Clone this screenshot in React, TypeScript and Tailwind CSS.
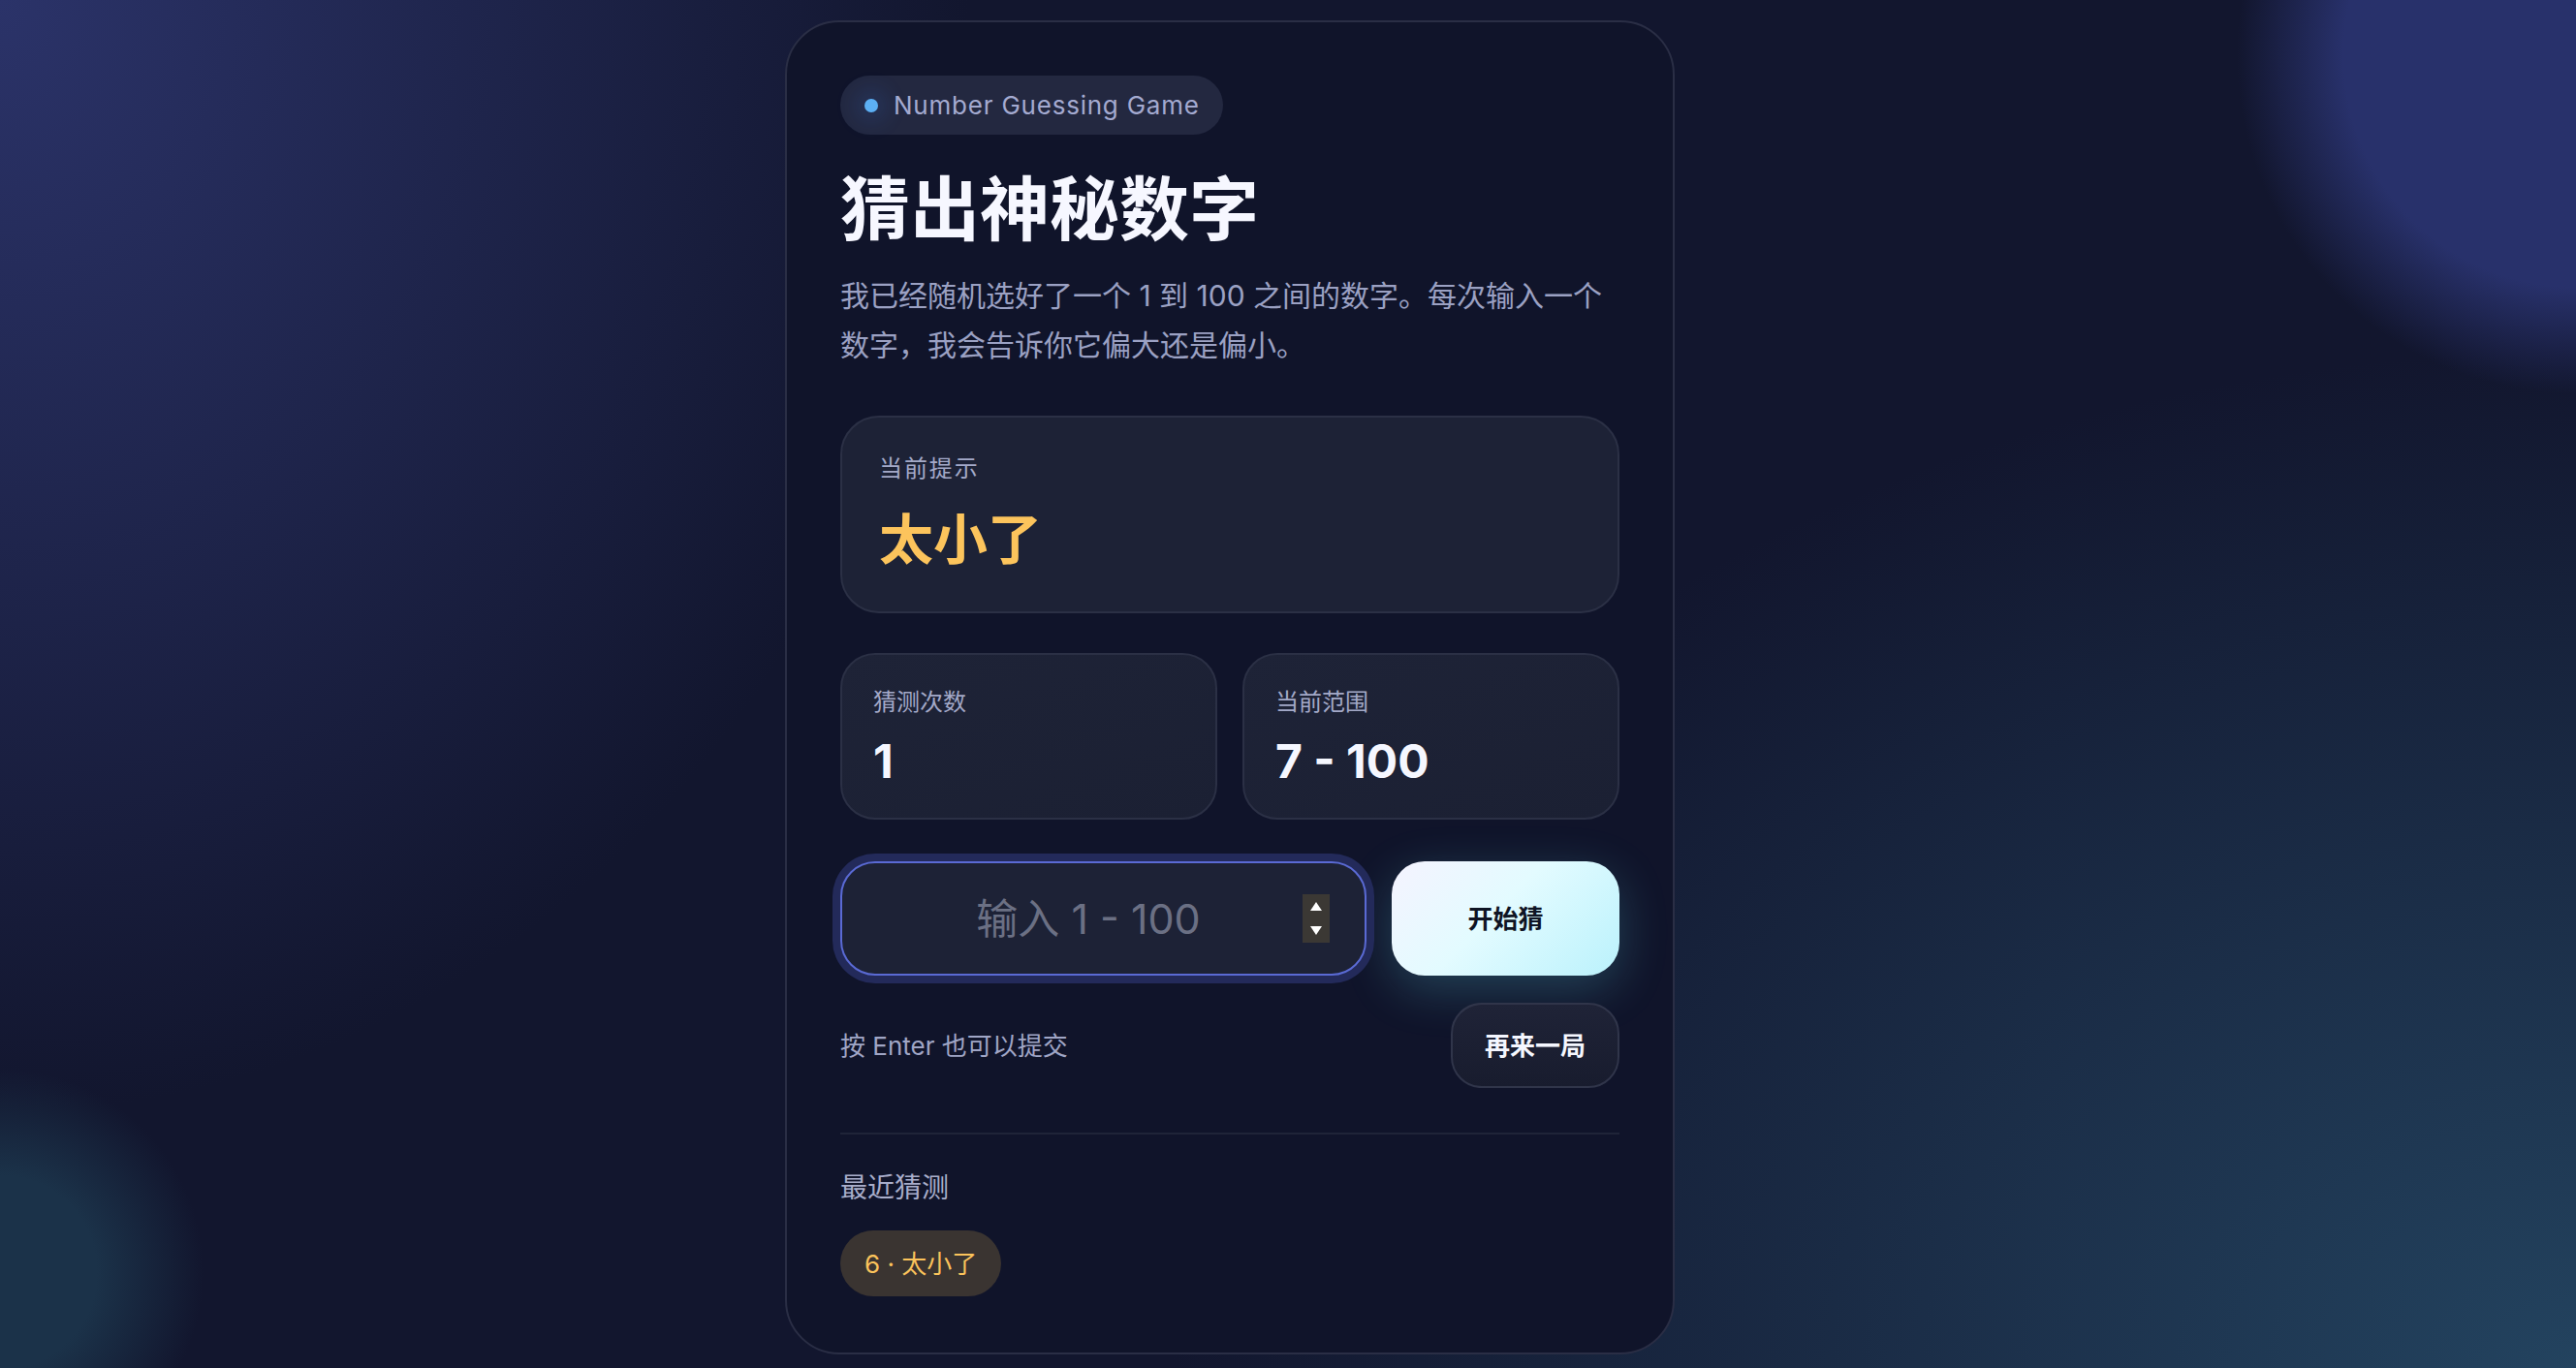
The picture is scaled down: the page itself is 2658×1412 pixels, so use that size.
import React, { useState } from "react";

const font = "font-['Inter','Noto_Sans_CJK_SC',sans-serif]";

const StatBox = ({ label, value }: { label: string; value: string }) => (
  <div className="rounded-[36px] border-2 border-[#2b3045] bg-[linear-gradient(160deg,#1e2337_0%,#1b2033_100%)] px-[32px] pt-[31px] pb-[29px]">
    <div className="text-[24px] leading-[36px] text-[#a3a9c8]">{label}</div>
    <div className="mt-[14px] text-[48px] leading-[58px] font-bold text-[#f5f7ff]">{value}</div>
  </div>
);

const App = () => {
  const [guess, setGuess] = useState<string>("");

  return (
    <div
      className={`${font} min-h-screen w-full overflow-hidden bg-[#12162e] bg-[image:radial-gradient(circle_at_100%_4%,#28316b_0px,#28316b_240px,transparent_350px),radial-gradient(circle_at_0%_93%,#1b3249_0px,#1b3249_100px,transparent_210px),radial-gradient(ellipse_1000px_1150px_at_0%_0%,#2b3369_0%,transparent_100%),radial-gradient(ellipse_1450px_1050px_at_100%_100%,#23435f_0%,transparent_100%)] flex justify-center pr-[120px] pt-[21px] pb-[14px]`}
    >
      <div className="w-[918px] rounded-[56px] border-2 border-[#2a2e45] bg-[#10142a] px-[55px] pt-[55px] pb-[56px]">
        {/* badge */}
        <div className="inline-flex h-[61px] items-center gap-[16px] rounded-full bg-[#232840] pl-[25px] pr-[24px]">
          <span className="h-[14px] w-[14px] rounded-full bg-[#5cb0f4] shadow-[0_0_22px_10px_rgba(56,130,246,0.14)]" />
          <span className="text-[26px] tracking-[0.03em] text-[#a4aad0]">Number Guessing Game</span>
        </div>

        <h1 className="mt-[37px] text-[72px] leading-[1.1] font-bold text-[#f6f7ff]">猜出神秘数字</h1>
        <p className="mt-[25px] text-[30px] leading-[51px] text-[#9ba1c3]">
          我已经随机选好了一个 1 到 100 之间的数字。每次输入一个数字，我会告诉你它偏大还是偏小。
        </p>

        {/* hint */}
        <div className="mt-[47px] rounded-[40px] border-2 border-[#2b3045] bg-[#1d2236] px-[38px] pt-[35px] pb-[40px]">
          <div className="text-[24px] leading-[36px] tracking-[0.08em] text-[#a3a9c8]">当前提示</div>
          <div className="mt-[22px] text-[56px] leading-[67px] font-bold text-[#fcc45c]">太小了</div>
        </div>

        {/* stats */}
        <div className="mt-[41px] grid grid-cols-2 gap-[26px]">
          <StatBox label="猜测次数" value="1" />
          <StatBox label="当前范围" value="7 - 100" />
        </div>

        {/* input row */}
        <div className="mt-[43px] flex items-center gap-[26px]">
          <div className="relative flex-1">
            <input
              type="text"
              inputMode="numeric"
              value={guess}
              onChange={(e) => setGuess(e.target.value)}
              placeholder="输入 1 - 100"
              className="h-[118px] w-full rounded-[36px] border-2 border-[#5a6ad4] bg-[#1d2236] pl-[40px] pr-[71px] text-center text-[43px] text-[#e5e7f5] placeholder:text-[#6b7084] shadow-[0_0_0_8px_#232a5a] outline-none"
            />
            <div className="absolute right-[38px] top-[34px] flex h-[50px] w-[28px] flex-col items-center justify-between bg-[#3b3834] py-[8px]">
              <svg width="12" height="9" viewBox="0 0 12 9">
                <path d="M6 0 L12 9 L0 9 Z" fill="#ffffff" />
              </svg>
              <svg width="12" height="9" viewBox="0 0 12 9">
                <path d="M0 0 L12 0 L6 9 Z" fill="#ffffff" />
              </svg>
            </div>
          </div>
          <button className="h-[118px] w-[235px] rounded-[34px] bg-[linear-gradient(135deg,#f5f3ff_0%,#e3fbff_45%,#baf2fc_100%)] text-[26px] font-bold text-[#0f1424] shadow-[0_14px_50px_rgba(103,232,249,0.22)]">
            开始猜
          </button>
        </div>

        {/* second row */}
        <div className="mt-[28px] flex items-center justify-between">
          <span className="text-[26px] text-[#a0a6c6]">按 Enter 也可以提交</span>
          <button className="h-[88px] w-[174px] rounded-[32px] border-2 border-[#30354a] bg-[linear-gradient(180deg,#1f2337_0%,#181c2e_100%)] text-[26px] font-bold text-[#f5f7ff]">
            再来一局
          </button>
        </div>

        <div className="mt-[46px] border-t-2 border-[#1f2438]" />

        <div className="mt-[35px] text-[28px] leading-[40px] text-[#a9aecb]">最近猜测</div>
        <div className="mt-[24px] flex gap-3">
          <span className="inline-flex h-[68px] items-center rounded-full bg-[#3a3431] px-[25px] text-[26px] text-[#fbc35b]">
            6 · 太小了
          </span>
        </div>
      </div>
    </div>
  );
};

export default App;
